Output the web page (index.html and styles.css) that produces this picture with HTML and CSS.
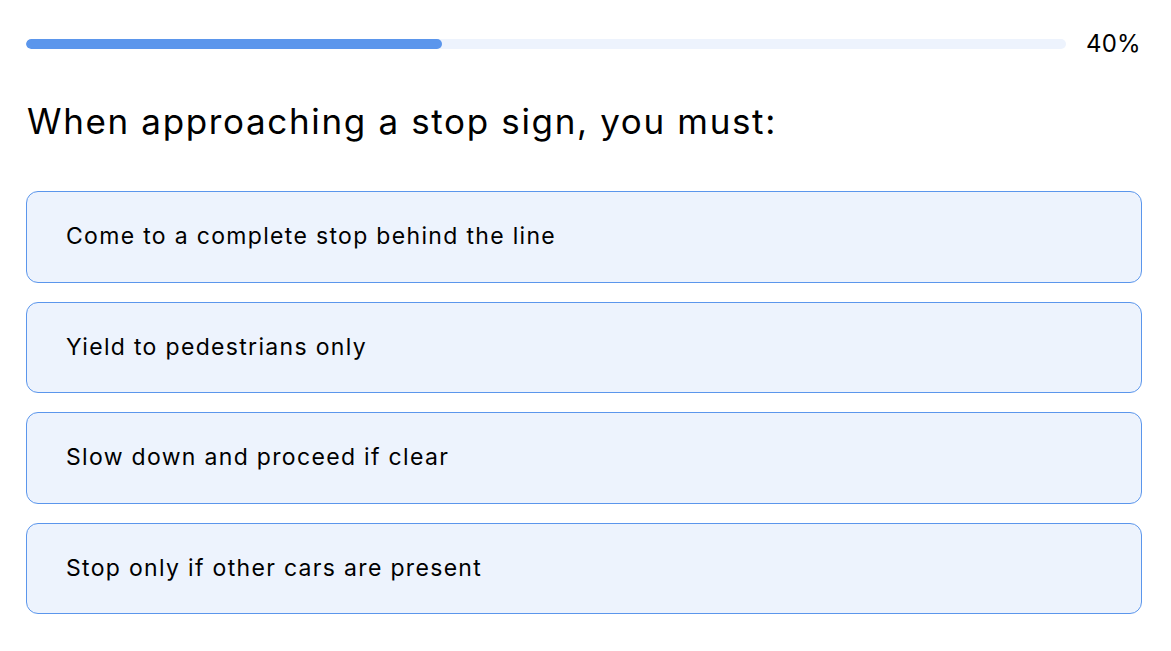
FILE: index.html
```html
<!DOCTYPE html>
<html>
<head>
<meta charset="utf-8">
<link rel="stylesheet" href="styles.css">
</head>
<body>
<div class="quiz">
  <div class="progress-row">
    <div class="track"><div class="fill" style="width:40%"></div></div>
    <span class="pct">40%</span>
  </div>
  <h1 class="question">When approaching a stop sign, you must:</h1>
  <div class="options">
    <div class="option">Come to a complete stop behind the line</div>
    <div class="option">Yield to pedestrians only</div>
    <div class="option">Slow down and proceed if clear</div>
    <div class="option">Stop only if other cars are present</div>
  </div>
</div>
</body>
</html>
```
FILE: styles.css
```css
html, body {
  margin: 0;
  padding: 0;
  background: #ffffff;
}
body {
  font-family: Inter, "Noto Sans", sans-serif;
  color: #000000;
}
.quiz {
  padding: 32px 29px 0 26px;
}
.progress-row {
  display: flex;
  align-items: center;
  gap: 20px;
  height: 24px;
  padding-right: 1px;
}
.track {
  flex: 1;
  height: 10px;
  background: #edf3fd;
  border-radius: 5px;
  overflow: hidden;
}
.fill {
  height: 100%;
  background: #5b96ec;
  border-radius: 5px;
}
.pct {
  font-size: 24px;
  line-height: 24px;
  letter-spacing: 0.3px;
}
.question {
  font-size: 35px;
  font-weight: 400;
  line-height: 42px;
  letter-spacing: 1.65px;
  margin: 44px 0 49px 1px;
}
.options {
  display: flex;
  flex-direction: column;
  gap: 19px;
}
.option {
  border: 1px solid #5b96ec;
  background: #edf3fd;
  border-radius: 12px;
  padding: 30px 39px;
  font-size: 23px;
  line-height: 29.6px;
  letter-spacing: 1.32px;
}
```
